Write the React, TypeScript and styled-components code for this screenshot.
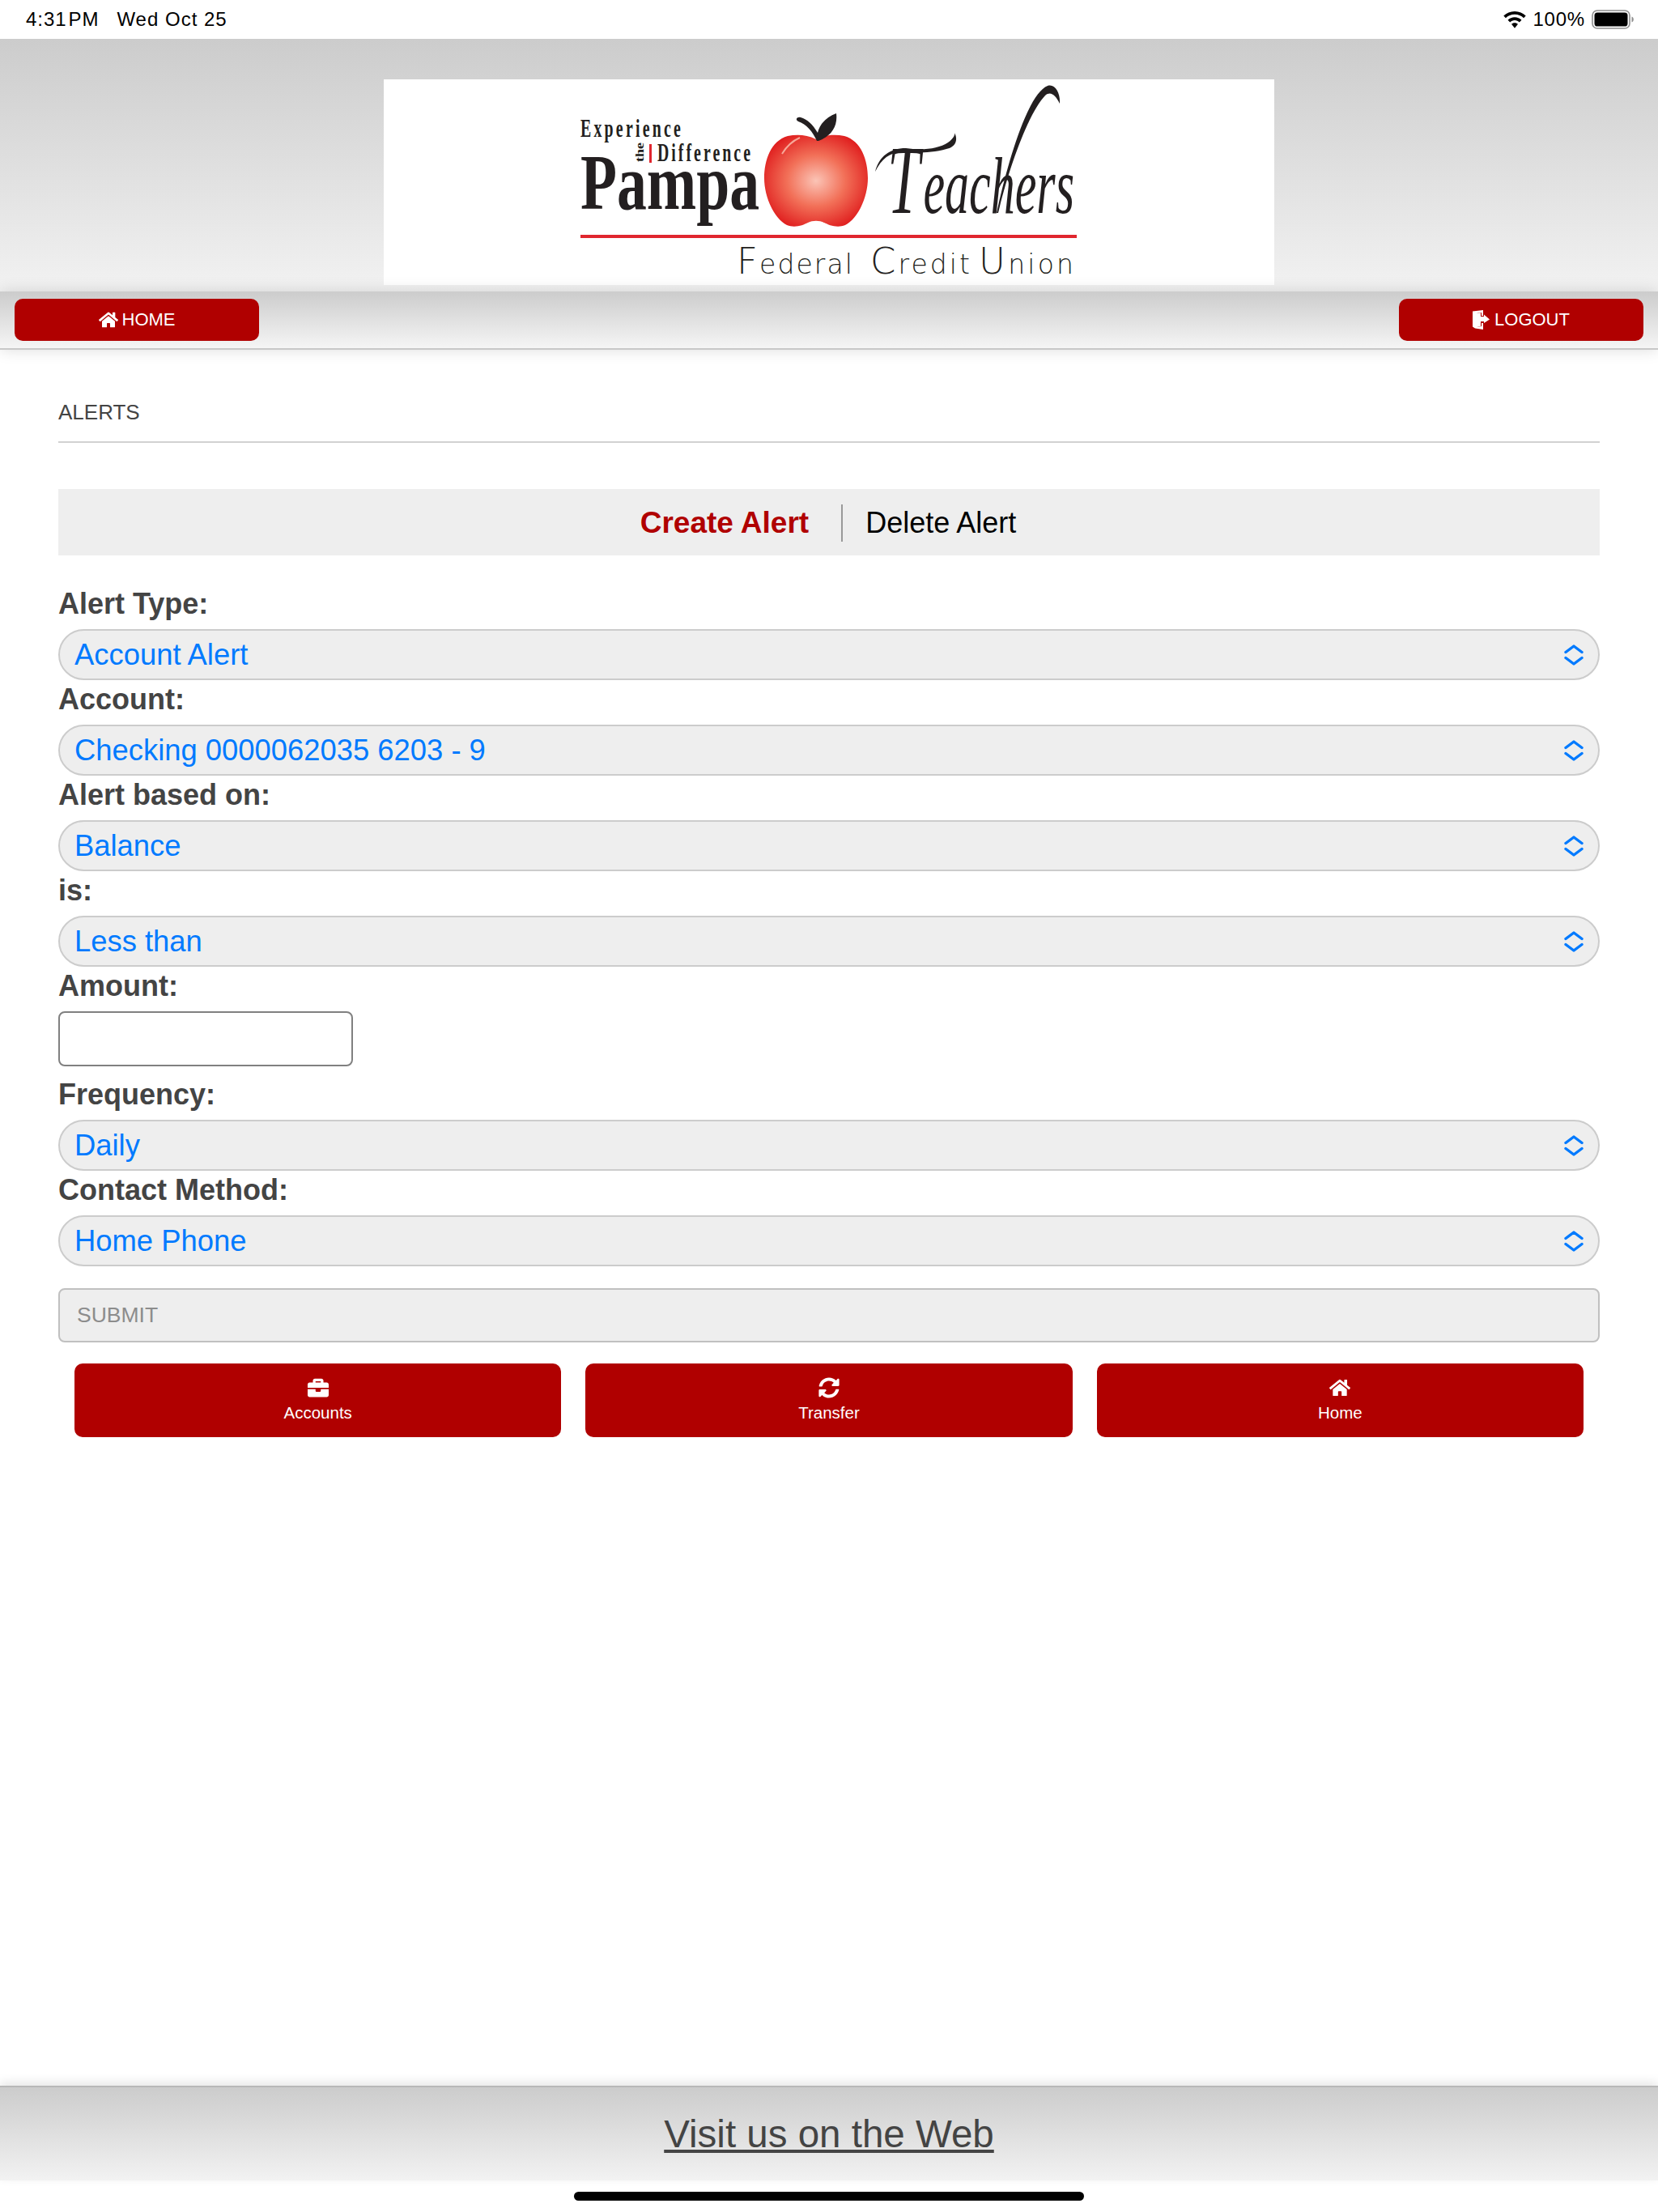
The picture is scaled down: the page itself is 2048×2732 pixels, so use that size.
import { createGlobalStyle, styled } from 'styled-components';
import { FaHome, FaBriefcase, FaSyncAlt } from 'react-icons/fa';

const GlobalStyle = createGlobalStyle`
  html, body {
    margin: 0;
    padding: 0;
    background: #fff;
    font-family: "Liberation Sans", Arial, sans-serif;
  }
`;

const Page = styled.div`
  width: 2048px;
  height: 2732px;
  display: flex;
  flex-direction: column;
  overflow: hidden;
  background: #fff;
`;

// 상단 상태바
const StatusBar = styled.div`
  height: 48px;
  flex: none;
  display: flex;
  align-items: center;
  justify-content: space-between;
  padding: 0 30px 0 32px;
  font-size: 24px;
  color: #000;
`;
const StatusLeft = styled.div`
  display: flex;
  gap: 22px;
  letter-spacing: 1px;
`;
const TimeText = styled.span`
  word-spacing: -6px;
`;
const StatusRight = styled.div`
  display: flex;
  align-items: center;
  gap: 8px;
  letter-spacing: 0.8px;
`;

const Header = styled.div`
  height: 312px;
  flex: none;
  box-sizing: border-box;
  padding-top: 50px;
  display: flex;
  justify-content: center;
  align-items: flex-start;
  background: linear-gradient(#cccccc, #f2f2f2);
`;
const LogoBox = styled.div`
  width: 1100px;
  height: 254px;
  background: #fff;
`;

const Nav = styled.div`
  height: 72px;
  flex: none;
  box-sizing: border-box;
  position: relative;
  display: flex;
  justify-content: space-between;
  padding: 9px 18px 0 18px;
  background: linear-gradient(#cccccc, #f5f5f5);
  border-bottom: 2px solid #c8c8c8;
  box-shadow: 0 0 18px rgba(0, 0, 0, 0.14);
`;
const NavButton = styled.div`
  width: 302px;
  height: 52px;
  display: flex;
  align-items: center;
  justify-content: center;
  gap: 5px;
  background: #b00000;
  border-radius: 10px;
  color: #fff;
  font-size: 22px;
`;

const Main = styled.div`
  flex: 1;
  padding: 0 72px;
`;
const PageTitle = styled.div`
  height: 115px;
  box-sizing: border-box;
  padding-top: 60px;
  font-size: 26px;
  line-height: 34px;
  color: #444;
  border-bottom: 2px solid #d2d2d2;
`;
const Tabs = styled.div`
  height: 82px;
  box-sizing: border-box;
  margin: 57px 0 36px;
  padding: 2px 2px 0 0;
  display: flex;
  align-items: center;
  justify-content: center;
  background: #eeeeee;
`;
const ActiveTab = styled.div`
  padding-right: 40px;
  border-right: 2px solid #999;
  font-size: 37px;
  font-weight: 700;
  line-height: 46px;
  color: #b00000;
`;
const Tab = styled.div`
  padding-left: 28px;
  font-size: 36px;
  line-height: 46px;
  color: #000;
`;
const Label = styled.div`
  height: 55px;
  font-size: 36px;
  font-weight: 700;
  line-height: 48px;
  color: #444;
`;
const SelectBox = styled.div`
  height: 63px;
  box-sizing: border-box;
  display: flex;
  align-items: center;
  justify-content: space-between;
  padding: 0 18px;
  background: #eeeeee;
  border: 2px solid #cccccc;
  border-radius: 32px;
  font-size: 36.4px;
  color: #007aff;
`;
const AmountInput = styled.div`
  width: 364px;
  height: 68px;
  margin-bottom: 11px;
  box-sizing: border-box;
  background: #fff;
  border: 2px solid #808080;
  border-radius: 8px;
`;
const SubmitBar = styled.div`
  height: 67px;
  margin: 27px 0 26px;
  box-sizing: border-box;
  display: flex;
  align-items: center;
  padding-left: 21px;
  background: #eeeeee;
  border: 2px solid #c0c0c0;
  border-radius: 8px;
  font-size: 26.5px;
  color: #8c8c8c;
`;
const QuickRow = styled.div`
  display: flex;
  gap: 30px;
  padding: 0 20px;
`;
const QuickButton = styled.div`
  flex: 1;
  height: 91px;
  display: flex;
  flex-direction: column;
  align-items: center;
  justify-content: flex-start;
  padding-top: 17px;
  box-sizing: border-box;
  gap: 5px;
  background: #b00000;
  border-radius: 10px;
  color: #fff;
  font-size: 20.5px;
  line-height: 26px;
`;

const Footer = styled.div`
  height: 117px;
  flex: none;
  box-sizing: border-box;
  display: flex;
  align-items: center;
  justify-content: center;
  background: linear-gradient(#cccccc, #f2f2f2);
  border-top: 2px solid #b8b8b8;
  box-shadow: 0 -4px 12px rgba(0, 0, 0, 0.1);
  position: relative;
`;
const FooterLink = styled.a`
  font-size: 47.5px;
  color: #444;
  text-decoration: underline;
`;
const HomeBar = styled.div`
  height: 39px;
  flex: none;
  display: flex;
  justify-content: center;
  padding-top: 14px;
  box-sizing: border-box;
`;
const HomeIndicator = styled.div`
  width: 630px;
  height: 11px;
  background: #000;
  border-radius: 6px;
`;

const Chevrons = () => (
  <svg width="24" height="28" viewBox="0 0 24 28" fill="none" stroke="#007aff" strokeWidth="3.4" strokeLinecap="round" strokeLinejoin="round">
    <path d="M2 10.5 L12 3 L22 10.5" />
    <path d="M2 17.5 L12 25 L22 17.5" />
  </svg>
);

const Wifi = () => (
  <svg width="28" height="21" viewBox="0 0 28 21" fill="#000">
    <path d="M14 0C8.6 0 3.8 2.1 0.3 5.6l2.6 2.7C5.8 5.5 9.7 3.8 14 3.8s8.2 1.7 11.1 4.5l2.6-2.7C24.2 2.1 19.4 0 14 0z" />
    <path d="M14 7.2c-3.3 0-6.3 1.3-8.5 3.5l2.7 2.7c1.5-1.5 3.5-2.4 5.8-2.4s4.3.9 5.8 2.4l2.7-2.7c-2.2-2.2-5.2-3.5-8.5-3.5z" />
    <path d="M14 14.2c-1.6 0-3 .6-4 1.6l4 5 4-5c-1-1-2.4-1.6-4-1.6z" />
  </svg>
);

const Battery = () => (
  <svg width="52" height="24" viewBox="0 0 52 24">
    <rect x="1" y="1" width="46" height="22" rx="6" fill="none" stroke="#8e8e8e" strokeWidth="1.6" />
    <rect x="3.5" y="3.5" width="41" height="17" rx="3.6" fill="#000" />
    <path d="M49.5 8.5c1.4.5 2.3 1.9 2.3 3.5s-.9 3-2.3 3.5z" fill="#8e8e8e" />
  </svg>
);

const DoorIcon = () => (
  <svg width="22" height="24" viewBox="0 0 22 24" fill="#fff">
    <path d="M0 1.5 L13 0 V7 H11 V3 L5 4 V21 L11 20 V16 H13 V24 L3 22.5 L0 20.5 Z" />
    <path d="M3 4.5 L10 3.2 V8 H14 V5.5 L21 11.5 L14 16 V14 H10 V20 L3 21.4 Z" />
  </svg>
);

// 로고는 그림이지만 글자는 실제 텍스트로 둔다
const Logo = () => (
  <svg width="1100" height="254" viewBox="0 0 1100 254">
    <defs>
      <radialGradient id="appleFill" cx="0.5" cy="0.5" r="0.56">
        <stop offset="0" stopColor="#fbc4b6" />
        <stop offset="0.5" stopColor="#f27058" />
        <stop offset="1" stopColor="#e01f1f" />
      </radialGradient>
    </defs>
    <g fill="#231f20" fontFamily='"Liberation Serif", serif'>
      <text x="392" y="71" transform="scale(0.62 1)" fontSize="32" fontWeight="700" letterSpacing="5.2">Experience</text>
      <text x="321" y="102" transform="rotate(-90 321 102)" fontSize="14" fontWeight="700" textLength="24" lengthAdjust="spacingAndGlyphs">the</text>
      <rect x="328" y="80" width="3" height="23" fill="#e0262e" />
      <text x="545" y="101" transform="scale(0.62 1)" fontSize="32" fontWeight="700" letterSpacing="4.9">Difference</text>
      <text x="243" y="160" fontSize="97" fontWeight="700" textLength="221" lengthAdjust="spacingAndGlyphs">Pampa</text>
      <text x="1037" y="165" transform="scale(0.6 1)" fontStyle="italic">
        <tspan fontSize="120">T</tspan>
        <tspan dx="7" fontSize="100">eachers</tspan>
      </text>
    </g>
    <path d="M757 165 C770 105 795 18 820 8 C830 5 836 18 835 30 C830 20 824 14 817 20 C796 42 772 110 759 165 Z" fill="#231f20" />
    <path d="M607 114 C612 95 625 85 645 85 C665 88 685 86 697 78 C704 73 706 68 705 66 C710 75 706 84 695 86 C675 92 650 90 640 90 C625 90 615 98 607 114 Z" fill="#231f20" />
    <path d="M534 74 C522 68 510 68 499 70 C478 76 470 100 470 122 C470 145 482 172 498 180 C508 184 518 180 524 177 C530 174 538 174 544 177 C550 180 560 184 570 180 C586 172 598 145 598 122 C598 100 590 76 569 70 C558 68 546 68 534 74 Z" fill="url(#appleFill)" />
    <path d="M492 92 C498 82 505 76 514 72" fill="none" stroke="#f7a898" strokeWidth="2" />
    <path d="M535 76 C530 65 522 55 512 52 C508 50 510 46 515 47 C523 49 530 56 536 66 C538 56 546 47 559 42 C561 58 553 70 537 76 Z" fill="#231f20" />
    <rect x="243" y="192" width="613" height="4" fill="#e0262e" />
    <g fontFamily='"DejaVu Sans", sans-serif' fontWeight="200" fontSize="33" fill="#231f20">
      <text x="436" y="240" textLength="143" lengthAdjust="spacing"><tspan fontSize="45">F</tspan>ederal</text>
      <text x="601" y="240" textLength="123" lengthAdjust="spacing"><tspan fontSize="45">C</tspan>redit</text>
      <text x="735" y="240" textLength="117" lengthAdjust="spacing"><tspan fontSize="45">U</tspan>nion</text>
    </g>
  </svg>
);

const selects = [
  { label: 'Alert Type:', value: 'Account Alert' },
  { label: 'Account:', value: 'Checking 0000062035 6203 - 9' },
  { label: 'Alert based on:', value: 'Balance' },
  { label: 'is:', value: 'Less than' }
];

const Field = ({ label, value }: { label: string; value: string }) => (
  <div>
    <Label>{label}</Label>
    <SelectBox>
      {value}
      <Chevrons />
    </SelectBox>
  </div>
);

const App = () => {
  return (
    <Page>
      <GlobalStyle />
      <StatusBar>
        <StatusLeft>
          <TimeText>4:31 PM</TimeText>
          <span>Wed Oct 25</span>
        </StatusLeft>
        <StatusRight>
          <Wifi />
          <span>100%</span>
          <Battery />
        </StatusRight>
      </StatusBar>
      <Header>
        <LogoBox>
          <Logo />
        </LogoBox>
      </Header>
      <Nav>
        <NavButton>
          <FaHome size={24} />
          HOME
        </NavButton>
        <NavButton>
          <DoorIcon />
          LOGOUT
        </NavButton>
      </Nav>
      <Main>
        <PageTitle>ALERTS</PageTitle>
        <Tabs>
          <ActiveTab>Create Alert</ActiveTab>
          <Tab>Delete Alert</Tab>
        </Tabs>
        {selects.map((s) => (
          <Field key={s.label} label={s.label} value={s.value} />
        ))}
        <Label>Amount:</Label>
        <AmountInput />
        <Field label="Frequency:" value="Daily" />
        <Field label="Contact Method:" value="Home Phone" />
        <SubmitBar>SUBMIT</SubmitBar>
        <QuickRow>
          <QuickButton>
            <FaBriefcase size={26} />
            Accounts
          </QuickButton>
          <QuickButton>
            <FaSyncAlt size={26} />
            Transfer
          </QuickButton>
          <QuickButton>
            <FaHome size={26} />
            Home
          </QuickButton>
        </QuickRow>
      </Main>
      <Footer>
        <FooterLink>Visit us on the Web</FooterLink>
      </Footer>
      <HomeBar>
        <HomeIndicator />
      </HomeBar>
    </Page>
  );
};

export default App;
